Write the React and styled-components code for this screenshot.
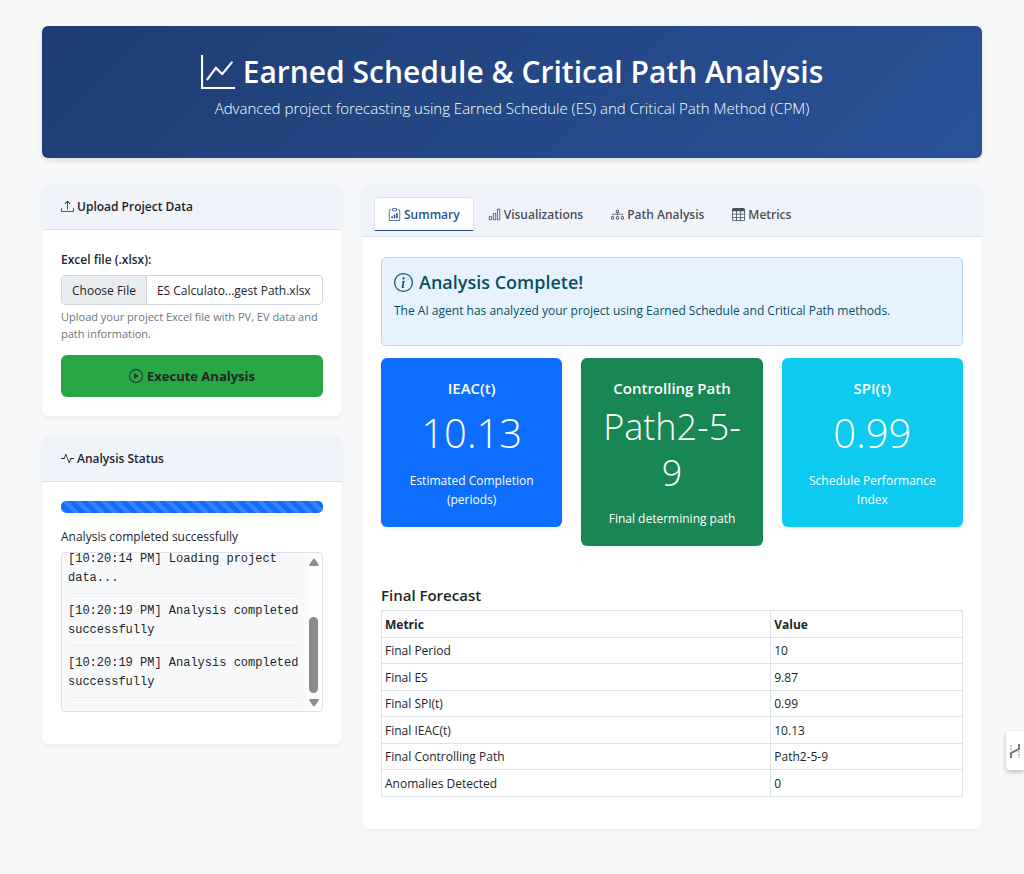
import React from "react";
import styled, { createGlobalStyle } from "styled-components";
import {
  BsGraphUp,
  BsUpload,
  BsPlayCircle,
  BsActivity,
  BsClipboardData,
  BsBarChart,
  BsDiagram3,
  BsTable,
  BsInfoCircle,
} from "react-icons/bs";

const GlobalStyle = createGlobalStyle`
  *, *::before, *::after { box-sizing: border-box; }
  body {
    margin: 0;
    background: #f8f9fb;
    color: #212529;
    font-family: "Open Sans", "Noto Sans", sans-serif;
    font-size: 12px;
    line-height: 19px;
  }
  h1, h2, h3, p { margin: 0; }
  button, input { font: inherit; }
`;

const Page = styled.main`
  max-width: 960px;
  margin: 0 auto;
  padding: 26px 10px;
`;

const Hero = styled.header`
  background: linear-gradient(135deg, #1e3c72 0%, #2a5298 100%);
  color: #fff;
  text-align: center;
  padding: 26px 20px 38px;
  margin-bottom: 26px;
  border-radius: 6px;
  box-shadow: 0 3px 5px rgba(0, 0, 0, 0.1);
`;

const HeroTitle = styled.h1`
  display: flex;
  justify-content: center;
  align-items: center;
  gap: 8px;
  font-size: 30px;
  font-weight: 600;
  line-height: 40px;
  svg { width: 34px; height: 34px; flex: none; }
`;

const HeroText = styled.p`
  margin-top: 4px;
  font-size: 15px;
  font-weight: 300;
  line-height: 24px;
`;

const Columns = styled.div`
  display: grid;
  grid-template-columns: calc((100% + 20px) / 3 - 20px) minmax(0, 1fr);
  gap: 20px;
  align-items: start;
`;

const Sidebar = styled.div`
  display: grid;
  gap: 20px;
`;

const Card = styled.section`
  background: #fff;
  border-radius: 6px;
  box-shadow: 0 2px 4px rgba(0, 0, 0, 0.05);
  overflow: hidden;
`;

const CardHeader = styled.div`
  background: #f0f3f9;
  border-bottom: 1px solid #dee2ec;
  padding: ${(p) => (p.$tabs ? "13px 12px 5px" : "13px 19px")};
`;

const CardTitle = styled.h2`
  display: flex;
  align-items: center;
  gap: 3px;
  font-size: 12px;
  font-weight: 600;
  line-height: 19px;
  svg { width: 13px; height: 13px; }
`;

const CardBody = styled.div`
  padding: ${(p) => (p.$roomy ? "20px 19px 32px" : "19px")};
`;

const FieldLabel = styled.label`
  display: block;
  font-weight: 600;
  line-height: 22px;
  margin-bottom: 4px;
`;

const FilePicker = styled.div`
  position: relative;
  display: flex;
  height: 30px;
  border: 1px solid #ced4da;
  border-radius: 4px;
  line-height: 30px;
  overflow: hidden;
`;

const FileButton = styled.span`
  padding: 0 10px;
  background: #e9ecef;
  border-right: 1px solid #ced4da;
  white-space: nowrap;
`;

const FileName = styled.span`
  flex: 1;
  padding-left: 10px;
  white-space: nowrap;
`;

const FileInput = styled.input`
  position: absolute;
  inset: 0;
  width: 100%;
  opacity: 0;
  cursor: pointer;
`;

const Help = styled.p`
  margin-top: 3px;
  font-size: 11px;
  line-height: 17px;
  color: #6c757d;
`;

const RunButton = styled.button`
  display: flex;
  width: 100%;
  height: 42px;
  margin-top: 13px;
  align-items: center;
  justify-content: center;
  gap: 4px;
  border: 0;
  border-radius: 6px;
  background: #28a745;
  color: #212529;
  font-size: 13px;
  font-weight: 700;
  cursor: pointer;
  svg { width: 14px; height: 14px; }
`;

const Progress = styled.div`
  height: 12px;
  border-radius: 5px;
  background-color: #0d6efd;
  background-image: linear-gradient(
    45deg,
    rgba(255, 255, 255, 0.15) 25%,
    transparent 25%,
    transparent 50%,
    rgba(255, 255, 255, 0.15) 50%,
    rgba(255, 255, 255, 0.15) 75%,
    transparent 75%,
    transparent
  );
  background-size: 13px 13px;
`;

const StatusText = styled.p`
  margin: 14px 0 6px;
`;

const LogBox = styled.div`
  display: flex;
  height: 160px;
  margin-bottom: 13px;
  border: 1px solid #dee2e6;
  border-radius: 3px;
  background: #f8f9fa;
  overflow: hidden;
`;

const LogList = styled.ol`
  flex: 1;
  min-width: 0;
  display: flex;
  flex-direction: column;
  justify-content: flex-end;
  margin: 0;
  padding: 0 6px 13px;
  list-style: none;
  font-family: "Liberation Mono", monospace;
  font-size: 12px;
`;

const LogItem = styled.li`
  flex: none;
  padding: 8px 0 5px;
  border-bottom: 1px solid #eceef1;
`;

const ScrollTrack = styled.div`
  flex: none;
  width: 16px;
  display: flex;
  flex-direction: column;
  align-items: center;
  justify-content: space-between;
  padding: 5px 0 4px;
  background: #fcfcfc;
  svg { width: 10px; height: 8px; fill: #8b8b8b; }
`;

const ScrollThumb = styled.div`
  width: 9px;
  height: 76px;
  margin: auto 0 6px;
  border-radius: 5px;
  background: #8b8b8b;
`;

const Tabs = styled.div`
  display: flex;
`;

const Tab = styled.button`
  display: flex;
  align-items: center;
  gap: 3px;
  height: 34px;
  padding: 0 13px;
  border: 1px solid ${(p) => (p.$active ? "#dee2e6" : "transparent")};
  border-bottom-color: ${(p) => (p.$active ? "#2a5298" : "transparent")};
  border-radius: 5px 5px 0 0;
  background: ${(p) => (p.$active ? "#fff" : "transparent")};
  color: ${(p) => (p.$active ? "#2a5298" : "#495057")};
  font-weight: 600;
  white-space: nowrap;
  cursor: pointer;
  svg { width: 13px; height: 13px; }
`;

const Notice = styled.div`
  padding: 12px 12px 25px;
  border: 1px solid #b6d8fd;
  border-radius: 5px;
  background: #e6f3fe;
  color: #055160;
`;

const NoticeTitle = styled.h2`
  display: flex;
  align-items: center;
  gap: 6px;
  margin-bottom: 6px;
  font-size: 18px;
  font-weight: 600;
  line-height: 25px;
  svg { width: 19px; height: 19px; }
`;

const Stats = styled.div`
  display: grid;
  grid-template-columns: repeat(3, minmax(0, 1fr));
  gap: 19px;
  align-items: start;
  margin: 12px 0 38px;
`;

const Stat = styled.article`
  padding: 19px 13px 18px;
  border-radius: 6px;
  background: ${(p) => p.$color};
  color: #fff;
  text-align: center;
  box-shadow: 0 2px 4px rgba(0, 0, 0, 0.06);
`;

const StatTitle = styled.h3`
  font-size: 15px;
  font-weight: 600;
  line-height: 22px;
  margin-bottom: 5px;
`;

const StatValue = styled.p`
  font-size: ${(p) => (p.$small ? "36px" : "40px")};
  font-weight: 300;
  line-height: ${(p) => (p.$small ? "46px" : "57px")};
  margin-bottom: ${(p) => (p.$small ? "13px" : "10px")};
`;

const StatNote = styled.p`
  padding: 0 8px;
`;

const SectionTitle = styled.h2`
  font-size: 15px;
  font-weight: 600;
  line-height: 22px;
  margin-bottom: 4px;
`;

const Table = styled.table`
  width: 100%;
  border-collapse: collapse;
  th, td {
    height: 27px;
    padding: 3px;
    border: 1px solid #dee2e6;
    text-align: left;
  }
  th:first-child { width: 67%; }
  th { padding-top: 4px; font-weight: 700; }
  tbody tr:nth-child(odd) td { height: 26px; }
`;

const SideHandle = styled.button`
  position: fixed;
  right: 0;
  top: 731px;
  display: flex;
  align-items: center;
  width: 18px;
  height: 39px;
  padding: 0 4px;
  border: 0;
  border-radius: 4px 0 0 4px;
  background: #fff;
  box-shadow: 0 2px 5px rgba(0, 0, 0, 0.25);
  svg { width: 10px; height: 14px; flex: none; }
`;

const log = [
  "[10:20:14 PM] Loading project data...",
  "[10:20:19 PM] Analysis completed successfully",
  "[10:20:19 PM] Analysis completed successfully",
];

const tabs = [
  ["Summary", BsClipboardData],
  ["Visualizations", BsBarChart],
  ["Path Analysis", BsDiagram3],
  ["Metrics", BsTable],
];

const stats = [
  { title: "IEAC(t)", value: "10.13", note: "Estimated Completion (periods)", color: "#0d6efd" },
  { title: "Controlling Path", value: "Path2-5-9", note: "Final determining path", color: "#198754", small: true },
  { title: "SPI(t)", value: "0.99", note: "Schedule Performance Index", color: "#0dcaf0" },
];

const forecast = [
  ["Final Period", "10"],
  ["Final ES", "9.87"],
  ["Final SPI(t)", "0.99"],
  ["Final IEAC(t)", "10.13"],
  ["Final Controlling Path", "Path2-5-9"],
  ["Anomalies Detected", "0"],
];

export default function App() {
  const [active, setActive] = React.useState("Summary");
  return (
    <>
      <GlobalStyle />
      <Page>
        <Hero>
          <HeroTitle>
            <BsGraphUp />
            Earned Schedule &amp; Critical Path Analysis
          </HeroTitle>
          <HeroText>
            Advanced project forecasting using Earned Schedule (ES) and Critical Path Method (CPM)
          </HeroText>
        </Hero>
        <Columns>
          <Sidebar>
            <Card>
              <CardHeader>
                <CardTitle>
                  <BsUpload />
                  Upload Project Data
                </CardTitle>
              </CardHeader>
              <CardBody>
                <FieldLabel htmlFor="project-file">Excel file (.xlsx):</FieldLabel>
                <FilePicker>
                  <FileButton>Choose File</FileButton>
                  <FileName>ES Calculato...gest Path.xlsx</FileName>
                  <FileInput id="project-file" type="file" accept=".xlsx" />
                </FilePicker>
                <Help>Upload your project Excel file with PV, EV data and path information.</Help>
                <RunButton type="button">
                  <BsPlayCircle />
                  Execute Analysis
                </RunButton>
              </CardBody>
            </Card>
            <Card>
              <CardHeader>
                <CardTitle>
                  <BsActivity />
                  Analysis Status
                </CardTitle>
              </CardHeader>
              <CardBody>
                <Progress role="progressbar" aria-valuenow={100} aria-label="Analysis progress" />
                <StatusText>Analysis completed successfully</StatusText>
                <LogBox>
                  <LogList>
                    {log.map((line, i) => (
                      <LogItem key={i}>{line}</LogItem>
                    ))}
                  </LogList>
                  <ScrollTrack aria-hidden="true">
                    <svg viewBox="0 0 10 8"><path d="M4.2 1Q5 0 5.8 1L9.6 6.6Q10 8 8.8 8H1.2Q0 8 .4 6.6Z" /></svg>
                    <ScrollThumb />
                    <svg viewBox="0 0 10 8"><path d="M4.2 7Q5 8 5.8 7L9.6 1.4Q10 0 8.8 0H1.2Q0 0 .4 1.4Z" /></svg>
                  </ScrollTrack>
                </LogBox>
              </CardBody>
            </Card>
          </Sidebar>
          <Card>
            <CardHeader $tabs>
              <Tabs role="tablist">
                {tabs.map(([name, Icon]) => (
                  <Tab
                    key={name}
                    type="button"
                    role="tab"
                    aria-selected={active === name}
                    $active={active === name}
                    onClick={() => setActive(name)}
                  >
                    <Icon />
                    {name}
                  </Tab>
                ))}
              </Tabs>
            </CardHeader>
            <CardBody $roomy>
              <Notice>
                <NoticeTitle>
                  <BsInfoCircle />
                  Analysis Complete!
                </NoticeTitle>
                <p>The AI agent has analyzed your project using Earned Schedule and Critical Path methods.</p>
              </Notice>
              <Stats>
                {stats.map((s) => (
                  <Stat key={s.title} $color={s.color}>
                    <StatTitle>{s.title}</StatTitle>
                    <StatValue $small={s.small}>{s.value}</StatValue>
                    <StatNote>{s.note}</StatNote>
                  </Stat>
                ))}
              </Stats>
              <SectionTitle>Final Forecast</SectionTitle>
              <Table>
                <thead>
                  <tr>
                    <th scope="col">Metric</th>
                    <th scope="col">Value</th>
                  </tr>
                </thead>
                <tbody>
                  {forecast.map(([metric, value]) => (
                    <tr key={metric}>
                      <td>{metric}</td>
                      <td>{value}</td>
                    </tr>
                  ))}
                </tbody>
              </Table>
            </CardBody>
          </Card>
        </Columns>
      </Page>
      <SideHandle type="button" aria-label="Open side panel">
        <svg viewBox="0 0 10 14" fill="none" stroke="#777" strokeWidth="2">
          <path d="M1 14V9L9 5V0" />
          <path d="M1 1V7M9 7V14" strokeWidth="1.5" strokeDasharray="2 1" opacity=".6" />
        </svg>
      </SideHandle>
    </>
  );
}
